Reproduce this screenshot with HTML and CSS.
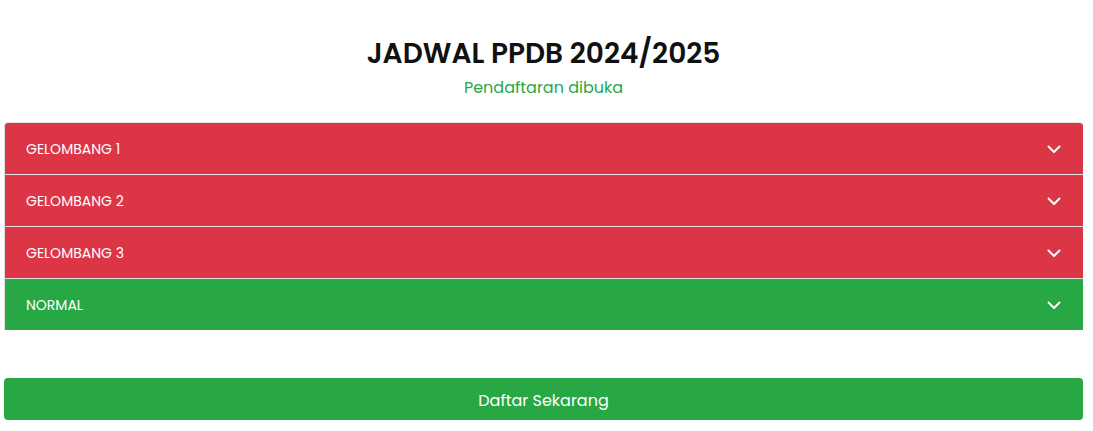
FILE: index.html
```html
<!DOCTYPE html>
<html lang="id">
<head>
<meta charset="utf-8">
<title>Jadwal PPDB 2024/2025</title>
<link rel="stylesheet" href="styles.css">
</head>
<body>
<main class="page">
  <header class="head">
    <h1 class="title">JADWAL PPDB 2024/2025</h1>
    <p class="subtitle">Pendaftaran dibuka</p>
  </header>
  <div class="accordion">
    <div class="item item-first">
      <button class="acc-btn red" type="button"><span>GELOMBANG 1</span>
        <svg class="chev" viewBox="0 0 16 16" width="16" height="16"><path d="M2.5 5.5 8 11l5.5-5.5" fill="none" stroke="#fff" stroke-width="2" stroke-linecap="round" stroke-linejoin="round"/></svg>
      </button>
    </div>
    <div class="item">
      <button class="acc-btn red" type="button"><span>GELOMBANG 2</span>
        <svg class="chev" viewBox="0 0 16 16" width="16" height="16"><path d="M2.5 5.5 8 11l5.5-5.5" fill="none" stroke="#fff" stroke-width="2" stroke-linecap="round" stroke-linejoin="round"/></svg>
      </button>
    </div>
    <div class="item">
      <button class="acc-btn red" type="button"><span>GELOMBANG 3</span>
        <svg class="chev" viewBox="0 0 16 16" width="16" height="16"><path d="M2.5 5.5 8 11l5.5-5.5" fill="none" stroke="#fff" stroke-width="2" stroke-linecap="round" stroke-linejoin="round"/></svg>
      </button>
    </div>
    <div class="item item-last">
      <button class="acc-btn green" type="button"><span>NORMAL</span>
        <svg class="chev" viewBox="0 0 16 16" width="16" height="16"><path d="M2.5 5.5 8 11l5.5-5.5" fill="none" stroke="#fff" stroke-width="2" stroke-linecap="round" stroke-linejoin="round"/></svg>
      </button>
    </div>
  </div>
  <a class="cta" href="#">Daftar Sekarang</a>
</main>
</body>
</html>
```

FILE: styles.css
```css
* { box-sizing: border-box; }
html, body { margin: 0; padding: 0; background: #fff; }
body {
  font-family: "Poppins", "Open Sans", "Noto Sans", sans-serif;
  color: #212529;
}
.page {
  padding: 36px 10px 0 4px;
  display: flex;
  flex-direction: column;
}
.head { text-align: center; }
.title {
  margin: 0;
  font-size: 28px;
  font-weight: 600;
  line-height: 36px;
  color: #111;
}
.subtitle {
  margin: 4px 0 0;
  font-size: 16px;
  line-height: 24px;
  color: #28a745;
}
.accordion {
  margin-top: 22px;
  display: flex;
  flex-direction: column;
}
.item {
  border: 1px solid #dfdfdf;
  border-bottom: 0;
  border-right: 0;
  background: #fff;
}
.item-first { border-top-left-radius: 4px; border-top-right-radius: 4px; overflow: hidden; }
.acc-btn {
  width: 100%;
  height: 51px;
  border: 0;
  margin: 0;
  padding: 1px 21px 0 21px;
  display: flex;
  align-items: center;
  justify-content: space-between;
  font-family: inherit;
  font-size: 14px;
  color: #fff;
  text-align: left;
  cursor: pointer;
}
.red { background: #dc3545; }
.green { background: #28a745; }
.chev { width: 16px; height: 16px; flex: none; }
.cta {
  margin-top: 48px;
  height: 42px;
  padding-top: 2px;
  display: flex;
  align-items: center;
  justify-content: center;
  background: #28a745;
  border-radius: 4px;
  color: #fff;
  font-size: 16px;
  text-decoration: none;
}
```
